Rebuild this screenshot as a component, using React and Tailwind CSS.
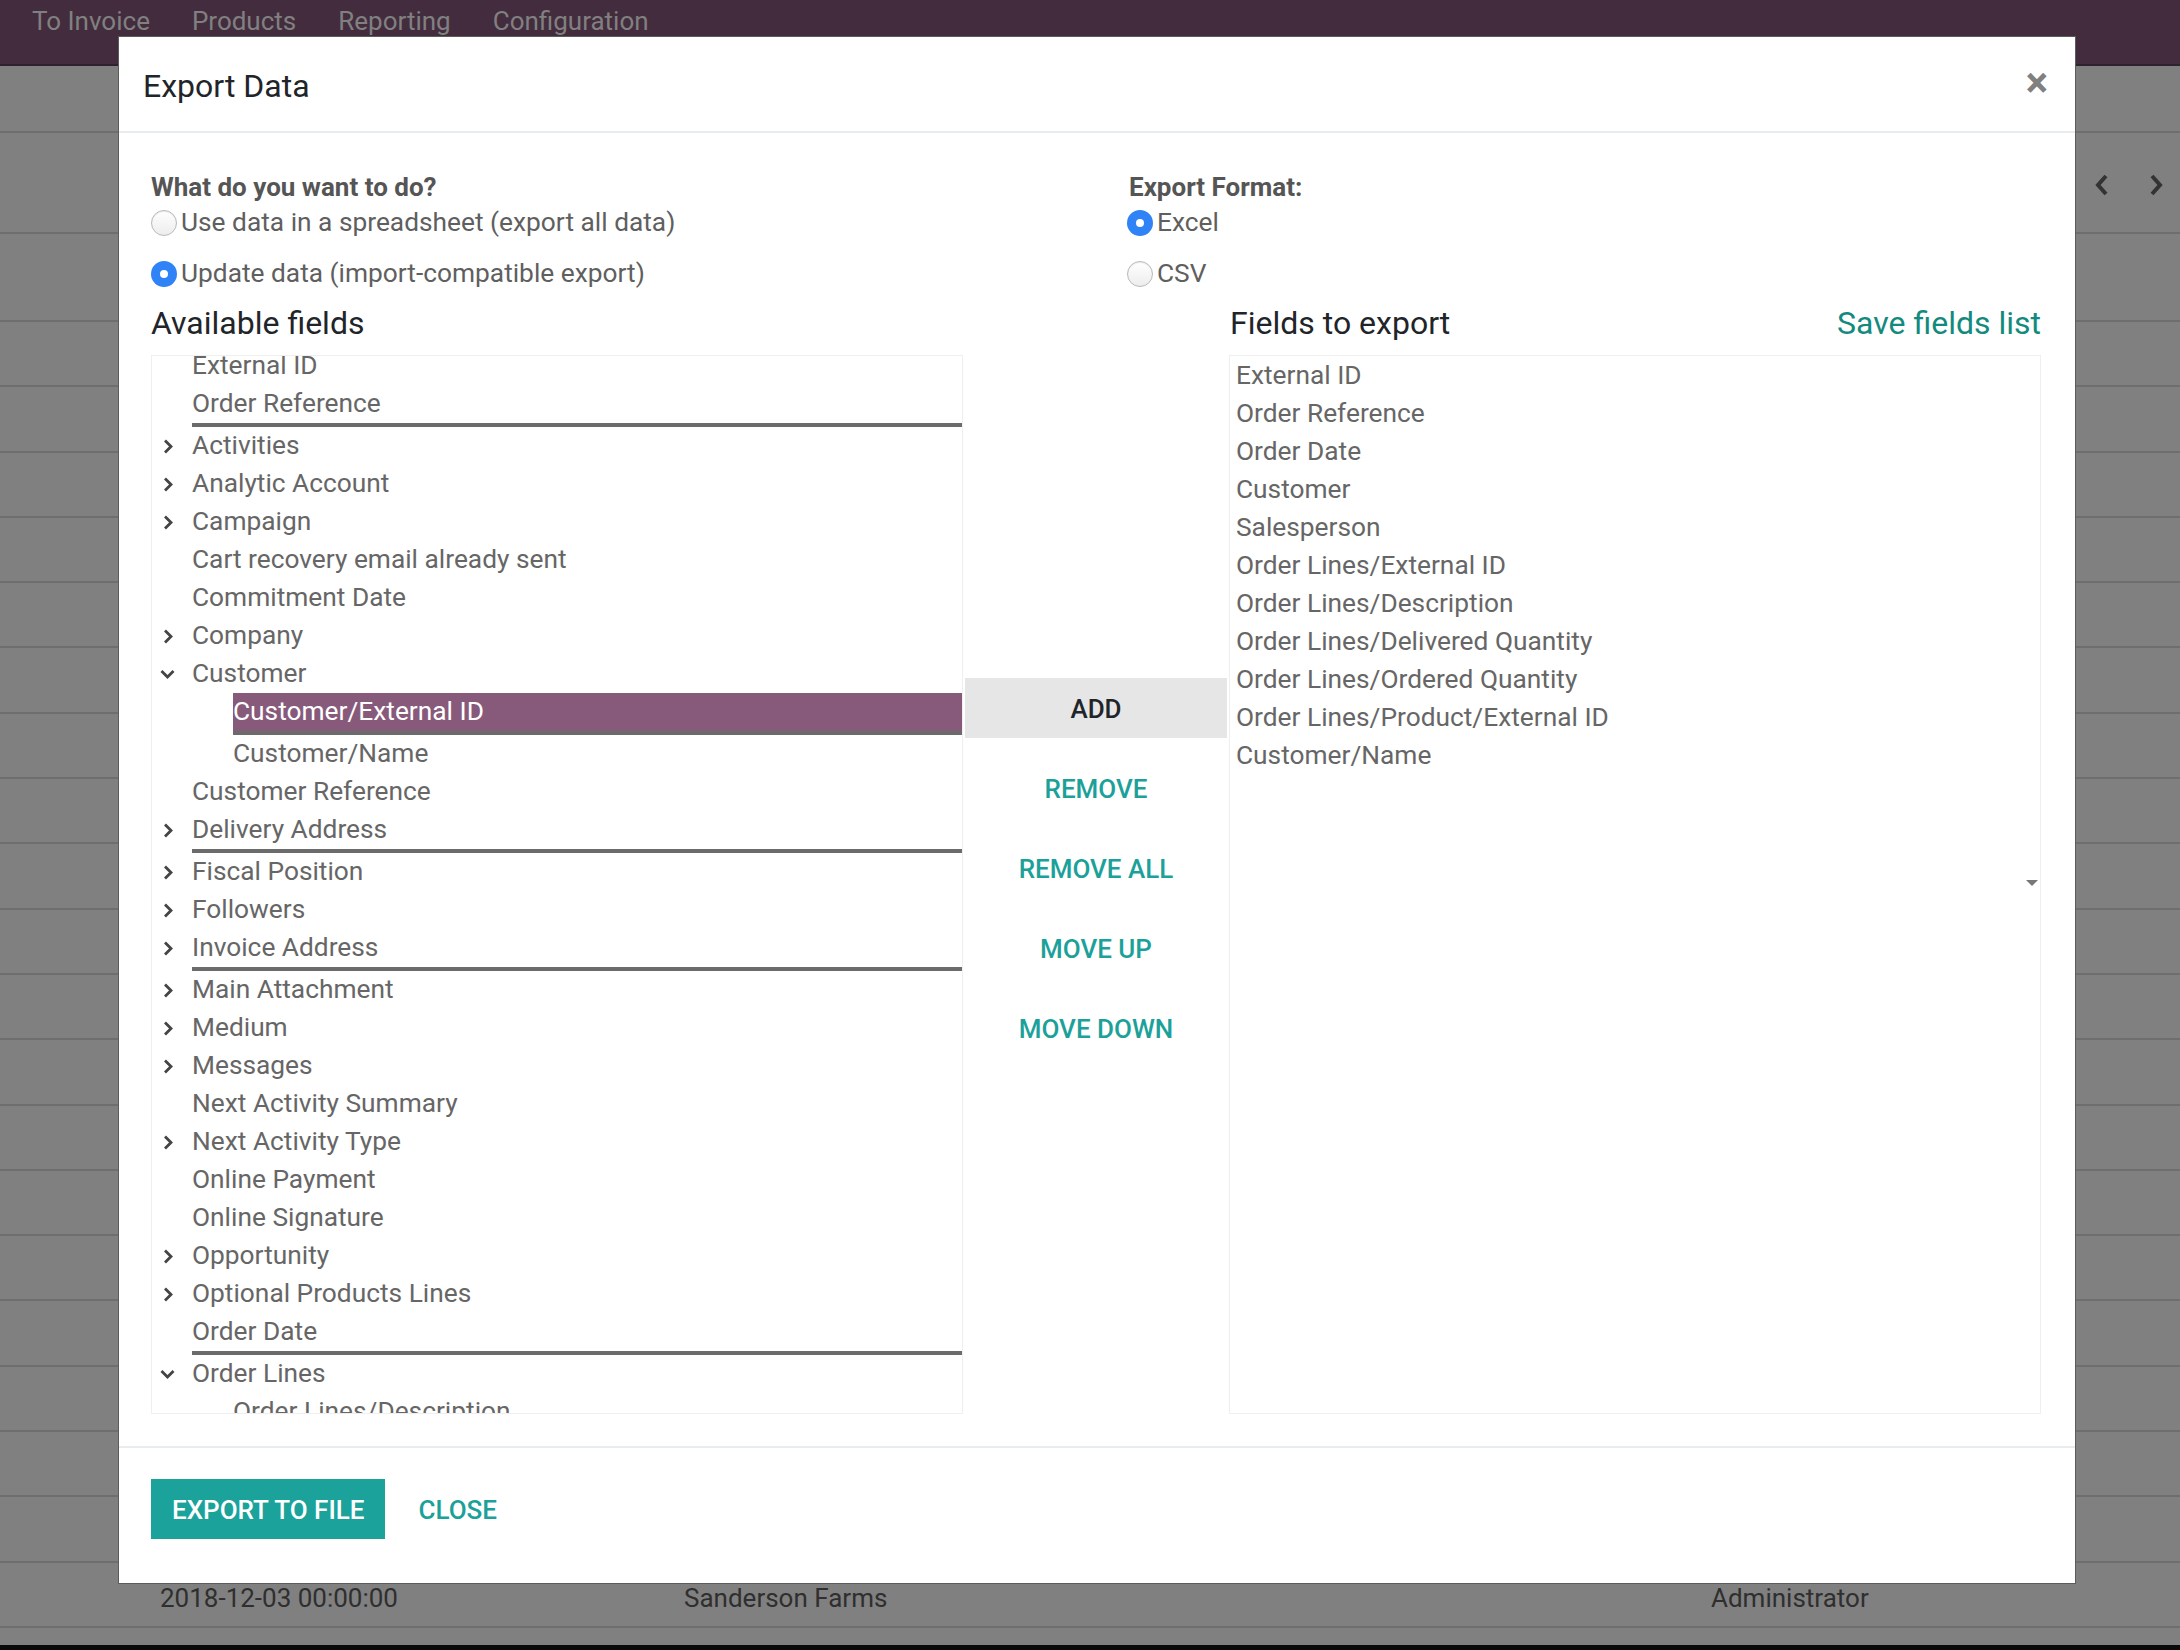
import { clsx } from "clsx";

const leftRows = [
  { label: "External ID" },
  { label: "Order Reference", sep: true },
  { label: "Activities", arrow: "right" },
  { label: "Analytic Account", arrow: "right" },
  { label: "Campaign", arrow: "right" },
  { label: "Cart recovery email already sent" },
  { label: "Commitment Date" },
  { label: "Company", arrow: "right" },
  { label: "Customer", arrow: "down" },
  { label: "Customer/External ID", level: 1, selected: true, sep: true },
  { label: "Customer/Name", level: 1 },
  { label: "Customer Reference" },
  { label: "Delivery Address", arrow: "right", sep: true },
  { label: "Fiscal Position", arrow: "right" },
  { label: "Followers", arrow: "right" },
  { label: "Invoice Address", arrow: "right", sep: true },
  { label: "Main Attachment", arrow: "right" },
  { label: "Medium", arrow: "right" },
  { label: "Messages", arrow: "right" },
  { label: "Next Activity Summary" },
  { label: "Next Activity Type", arrow: "right" },
  { label: "Online Payment" },
  { label: "Online Signature" },
  { label: "Opportunity", arrow: "right" },
  { label: "Optional Products Lines", arrow: "right" },
  { label: "Order Date", sep: true },
  { label: "Order Lines", arrow: "down" },
  { label: "Order Lines/Description", level: 1 },
];

const exportRows = [
  "External ID",
  "Order Reference",
  "Order Date",
  "Customer",
  "Salesperson",
  "Order Lines/External ID",
  "Order Lines/Description",
  "Order Lines/Delivered Quantity",
  "Order Lines/Ordered Quantity",
  "Order Lines/Product/External ID",
  "Customer/Name",
];

function Chevron({ dir }) {
  if (dir === "down") {
    return (
      <svg width="15" height="10" viewBox="0 0 15 10">
        <path d="M1.5 2 L7.5 8 L13.5 2" fill="none" stroke="#444" strokeWidth="2.8" />
      </svg>
    );
  }
  return (
    <svg width="10" height="15" viewBox="0 0 10 15">
      <path d="M2 1.5 L8 7.5 L2 13.5" fill="none" stroke="#444" strokeWidth="2.8" />
    </svg>
  );
}

function Radio({ checked }) {
  return checked ? (
    <span className="flex size-[26px] shrink-0 items-center justify-center rounded-full bg-[#3083f6]">
      <span className="size-[8px] rounded-full bg-white" />
    </span>
  ) : (
    <span className="size-[26px] shrink-0 rounded-full border border-[#b9b9b9] bg-gradient-to-b from-white to-[#ededed] shadow-[inset_0_1px_1px_rgba(0,0,0,0.08)]" />
  );
}

function RadioRow({ checked, label, className }) {
  return (
    <div className={clsx("flex h-[36px] items-center gap-[4px] text-[26.3px] text-[#5f5f5f]", className)}>
      <Radio checked={checked} />
      <span>{label}</span>
    </div>
  );
}

function TreeRow({ row }) {
  return (
    <div className="flex items-start">
      <div className={clsx("flex h-[38px] shrink-0 items-center justify-end", row.level ? "w-[81px]" : "w-[40px]")}>
        {row.arrow && (
          <span className="mr-[17px] flex w-[15px] justify-center">
            <Chevron dir={row.arrow} />
          </span>
        )}
      </div>
      <div
        className={clsx(
          "flex flex-1 items-center whitespace-nowrap text-[26.3px]",
          row.sep ? "h-[42px] border-b-4 border-[#6b6b6b]" : "h-[38px]",
          row.selected ? "bg-[#875a7b] text-white" : "text-[#666]"
        )}
      >
        {row.label}
      </div>
    </div>
  );
}

function ActionButton({ children, primary }) {
  return (
    <button
      className={clsx(
        "flex h-[60px] w-full items-center justify-center pt-[2px] text-[26px] font-medium uppercase",
        primary ? "bg-[#e6e6e6] text-[#212529]" : "text-[#1ba19a]"
      )}
    >
      {children}
    </button>
  );
}

function Background() {
  const rows = Array.from({ length: 20 });
  return (
    <div className="flex h-full flex-col">
      <div className="flex h-[64px] items-start gap-[42px] bg-[#432c3e] pl-[32px] pt-[2px] text-[26px] text-[#808080]">
        <span>To Invoice</span>
        <span>Products</span>
        <span>Reporting</span>
        <span>Configuration</span>
      </div>
      <div className="h-[2px] bg-[#2f2230]" />
      <div className="flex h-[67px] border-b-2 border-[#6e6e6e]" />
      <div className="flex h-[101px] items-center justify-end gap-[40px] border-b-2 border-[#6e6e6e] pr-[17px] pt-[5px]">
        <svg width="14" height="22" viewBox="0 0 14 22">
          <path d="M11 2 L3 11 L11 20" fill="none" stroke="#333" strokeWidth="4" />
        </svg>
        <svg width="14" height="22" viewBox="0 0 14 22">
          <path d="M3 2 L11 11 L3 20" fill="none" stroke="#333" strokeWidth="4" />
        </svg>
      </div>
      <div className="h-[88px] border-b-2 border-[#6e6e6e]" />
      {rows.map((_, i) => (
        <div key={i} className="h-[65.3px] border-b-2 border-[#6e6e6e]">
          {i === 19 && (
            <div className="flex h-full items-center pt-[8px] text-[26px] text-[#2f2f2f]">
              <span className="w-[684px] pl-[160px]">2018-12-03 00:00:00</span>
              <span className="w-[1027px]">Sanderson Farms</span>
              <span>Administrator</span>
            </div>
          )}
        </div>
      ))}
      <div className="flex-1" />
      <div className="h-[5px] bg-[#0a0a0a]" />
    </div>
  );
}

export default function App() {
  return (
    <div className="relative h-[1650px] w-[2180px] overflow-hidden bg-[#808080] font-['Roboto','Liberation_Sans',sans-serif]">
      <Background />

      <div className="absolute left-[118px] top-[36px] flex h-[1548px] w-[1958px] flex-col border border-[#5c5c5c] bg-white">
        <div className="flex h-[96px] shrink-0 items-center justify-between border-b-2 border-[#e9ecef] pl-[24px] pr-[27px] pt-[3px]">
          <h4 className="text-[32px] text-[#212529]">Export Data</h4>
          <button className="-mt-[6px] text-[42px] font-bold leading-none text-[#808080]">×</button>
        </div>

        <div className="flex-1 pl-[32px] pr-[34px] pt-[36px]">
          <div className="grid grid-cols-[978px_1fr]">
            <div>
              <div className="h-[36px] text-[26px] font-bold leading-[36px] text-[#555]">What do you want to do?</div>
              <RadioRow label="Use data in a spreadsheet (export all data)" />
              <RadioRow checked label="Update data (import-compatible export)" className="mt-[15px]" />
            </div>
            <div>
              <div className="h-[36px] text-[26px] font-bold leading-[36px] text-[#555]">Export Format:</div>
              <RadioRow checked label="Excel" className="-ml-[2px] gap-[2px]" />
              <RadioRow label="CSV" className="-ml-[2px] mt-[15px] gap-[2px]" />
            </div>
          </div>

          <div className="mt-[9px] grid grid-cols-[812px_266px_812px]">
            <div className="flex h-[44px] items-center text-[32px] text-[#212529]">Available fields</div>
            <div />
            <div className="flex h-[44px] items-center justify-between pl-[1px] text-[32px]">
              <span className="text-[#212529]">Fields to export</span>
              <a className="text-[#138a7e]">Save fields list</a>
            </div>

            <div className="mt-[10px] h-[1059px] overflow-hidden border border-[#efefef]">
              <div className="-mt-[9px]">
                {leftRows.map((row) => (
                  <TreeRow key={row.label} row={row} />
                ))}
              </div>
            </div>

            <div className="mt-[10px] flex flex-col gap-[20px] px-[2px] pt-[323px]">
              <ActionButton primary>Add</ActionButton>
              <ActionButton>Remove</ActionButton>
              <ActionButton>Remove all</ActionButton>
              <ActionButton>Move up</ActionButton>
              <ActionButton>Move down</ActionButton>
            </div>

            <div className="relative mt-[10px] h-[1059px] overflow-hidden border border-[#efefef] pl-[6px] pt-[1px]">
              {exportRows.map((label) => (
                <div key={label} className="flex h-[38px] items-center whitespace-nowrap text-[26.3px] text-[#666]">
                  {label}
                </div>
              ))}
              <svg className="absolute right-[2px] top-[524px]" width="12" height="6" viewBox="0 0 12 6">
                <path d="M0 0 L12 0 L6 6 Z" fill="#777" />
              </svg>
            </div>
          </div>
        </div>

        <div className="flex h-[137px] shrink-0 items-start gap-[33px] border-t-2 border-[#e9ecef] pl-[32px] pt-[31px]">
          <button className="flex h-[60px] items-center bg-[#1aa29b] px-[21px] pt-[2px] text-[26px] font-medium uppercase text-white">
            Export to file
          </button>
          <button className="flex h-[60px] items-center pt-[2px] text-[26px] font-medium uppercase text-[#1ba19a]">Close</button>
        </div>
      </div>
    </div>
  );
}
